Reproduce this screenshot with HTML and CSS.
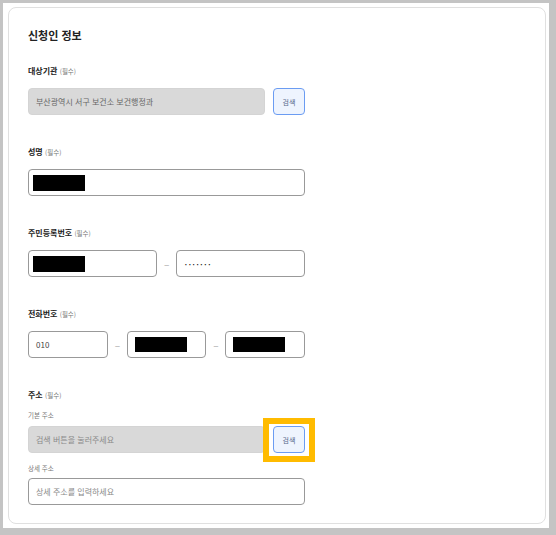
FILE: index.html
```html
<!DOCTYPE html>
<html lang="ko">
<head>
    <meta charset="UTF-8">
    <meta name="viewport" content="width=device-width, initial-scale=1.0">
    <title>신청인 정보</title>
    <link rel="stylesheet" href="styles.css">
</head>
<body>
    <div class="frame">
        <div class="card">
            <h2 class="title">신청인 정보</h2>

            <div class="group">
                <div class="label">대상기관 <span class="req">(필수)</span></div>
                <div class="row">
                    <div class="field disabled">부산광역시 서구 보건소 보건행정과</div>
                    <button class="btn-search">검색</button>
                </div>
            </div>

            <div class="group">
                <div class="label">성명 <span class="req">(필수)</span></div>
                <div class="field"><span class="redact name"></span></div>
            </div>

            <div class="group">
                <div class="label">주민등록번호 <span class="req">(필수)</span></div>
                <div class="split two">
                    <div class="field"><span class="redact name"></span></div>
                    <span class="dash">–</span>
                    <div class="field"><span class="dots">•••••••</span></div>
                </div>
            </div>

            <div class="group">
                <div class="label">전화번호 <span class="req">(필수)</span></div>
                <div class="split three">
                    <div class="field value">010</div>
                    <span class="dash">–</span>
                    <div class="field"><span class="redact phone"></span></div>
                    <span class="dash">–</span>
                    <div class="field"><span class="redact phone"></span></div>
                </div>
            </div>

            <div class="group address">
                <div class="label">주소 <span class="req">(필수)</span></div>
                <div class="sublabel">기본 주소</div>
                <div class="row">
                    <div class="field disabled placeholder">검색 버튼을 눌러주세요</div>
                    <button class="btn-search highlighted">검색</button>
                </div>
                <div class="sublabel second">상세 주소</div>
                <div class="field placeholder">상세 주소를 입력하세요</div>
            </div>
        </div>
    </div>
</body>
</html>
```

FILE: styles.css
```css
body {
    margin: 0;
    background-color: #c4c4c4;
    font-family: "Noto Sans CJK KR", "Noto Sans", sans-serif;
    color: #222;
}
.frame {
    margin: 3px 7px 0 3px;
    height: 525px;
    background-color: white;
    padding: 4px 3px 4px 5px;
    box-sizing: border-box;
}
.card {
    height: 100%;
    box-sizing: border-box;
    border: 1px solid #e0e0e0;
    border-radius: 8px;
    padding: 20px 19px 0;
}
.title {
    margin: 0;
    font-size: 11px;
    line-height: 14px;
    font-weight: bold;
    color: #222;
}
.group {
    width: 277px;
    margin-top: 31px;
}
.group:first-of-type {
    margin-top: 23px;
}
.label {
    font-size: 8px;
    line-height: 12px;
    font-weight: bold;
    margin-bottom: 11px;
}
.req {
    font-size: 6.5px;
    font-weight: normal;
    color: #777;
}
.sublabel {
    font-size: 6.5px;
    line-height: 10px;
    color: #777;
    margin: -1px 0 6px;
}
.sublabel.second {
    margin: 10px 0 5px;
}
.address .label {
    margin-bottom: 10px;
}
.row {
    display: flex;
    gap: 8px;
}
.row .field {
    flex: 1;
}
.field {
    height: 27px;
    box-sizing: border-box;
    border: 1px solid #999;
    border-radius: 4px;
    background-color: white;
    padding: 0 7px;
    display: flex;
    align-items: center;
    font-size: 8px;
    color: #444;
    min-width: 0;
}
.field.disabled {
    background-color: #d9d9d9;
    border-color: #d4d4d4;
    color: #666;
}
.field.placeholder {
    color: #888;
}
.disabled.placeholder {
    color: #8a8a8a;
}
.split {
    display: grid;
    gap: 7px;
    align-items: center;
}
.split.two {
    grid-template-columns: 1fr 5px 1fr;
}
.split.three {
    grid-template-columns: 1fr 5px 1fr 5px 1fr;
}
.dash {
    font-size: 10px;
    color: #aaa;
    text-align: center;
}
.redact {
    display: block;
    background-color: black;
    width: 52px;
}
.redact.name {
    height: 16px;
    margin-left: -3px;
}
.redact.phone {
    height: 15px;
}
.dots {
    font-size: 5px;
    letter-spacing: 2.2px;
    color: #111;
    margin-left: 1px;
}
.btn-search {
    position: relative;
    width: 32px;
    height: 27px;
    padding: 0;
    border: 1px solid #6b9cf2;
    border-radius: 4px;
    background-color: #eef4fe;
    color: #55658a;
    font-family: inherit;
    font-size: 7px;
}
.btn-search.highlighted::after {
    content: "";
    position: absolute;
    left: -11px;
    top: -9px;
    width: 52px;
    height: 44px;
    box-sizing: border-box;
    border: 6px solid #ffbb00;
}
```
